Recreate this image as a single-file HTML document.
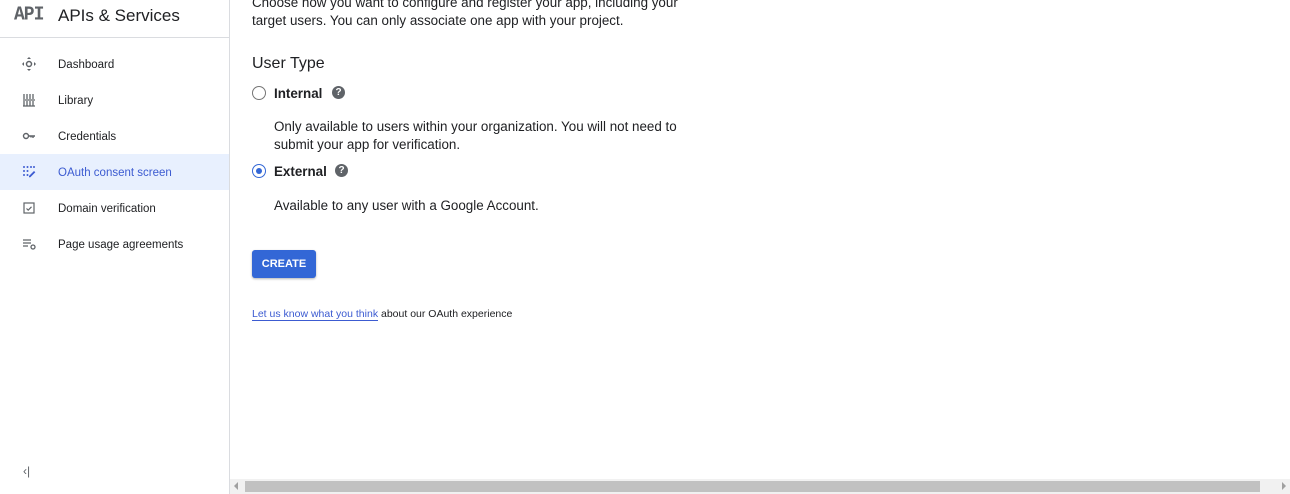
<!DOCTYPE html>
<html><head><meta charset="utf-8"><style>
*{margin:0;padding:0;box-sizing:border-box}
body{width:1290px;height:494px;overflow:hidden;background:#fff;font-family:"Liberation Sans",Arial,sans-serif;color:#202124;position:relative}
.side{position:absolute;left:0;top:0;width:230px;height:494px;border-right:1px solid #dadce0;background:#fff}
.hdr{height:38px;border-bottom:1px solid #dadce0;position:relative}
.api{position:absolute;left:14px;top:5px;font-family:"Liberation Mono",monospace;font-weight:bold;font-size:18px;color:#5f6368;letter-spacing:-1px;transform:scaleY(1.1)}
.title{position:absolute;left:58px;top:6px;font-size:17px;color:#202124}
.item{position:absolute;left:0;width:229px;height:36px;font-size:11.5px;line-height:38px}
.item span{position:absolute;left:58px}
.item svg{position:absolute;left:22px;top:11px}
.sel{background:#e8f0fe;color:#3c5bd1}
.main{position:absolute;left:252px;top:0;font-size:13.4px;line-height:18px}
.radio{position:absolute;width:14px;height:14px;border:1.5px solid #757575;border-radius:50%}
.rsel{border-color:#3367d6}
.rsel:after{content:"";position:absolute;left:2.5px;top:2.5px;width:6px;height:6px;border-radius:50%;background:#3367d6}
.q{position:absolute;width:13px;height:13px;border-radius:50%;background:#5f6368;color:#fff;font-size:10px;font-weight:bold;text-align:center;line-height:13px}
.btn{position:absolute;left:252px;top:250px;width:64px;height:28px;background:#3367d6;border-radius:3px;color:#fff;font-size:11px;font-weight:bold;text-align:center;line-height:28px;box-shadow:0 1px 2px rgba(0,0,0,.3)}
.sb{position:absolute;left:230px;top:479px;width:1060px;height:15px;background:#f1f1f1}
.th{position:absolute;left:245px;top:481px;width:1015px;height:11px;background:#c1c1c1}
</style></head><body>
<div class="side">
<div class="hdr"><div class="api">API</div><div class="title">APIs &amp; Services</div></div>
<div class="item" style="top:46px"><svg width="14" height="14" viewBox="0 0 14 14" fill="#5f6368"><path d="M7 0l2 2H5zM7 14l2-2H5zM0 7l2-2v4zM14 7l-2-2v4z"/><circle cx="7" cy="7" r="2.5" fill="none" stroke="#5f6368" stroke-width="1.5"/></svg><span>Dashboard</span></div>
<div class="item" style="top:82px"><svg width="14" height="14" viewBox="0 0 14 14" stroke="#5f6368" stroke-width="1.3"><path d="M2 1v5M5 1v5M8 1v5M11 1v5M1 7h12M2 8v5M5 8v5M8 8v5M11 8v5M1 13h12"/></svg><span>Library</span></div>
<div class="item" style="top:118px"><svg width="14" height="14" viewBox="0 0 14 14"><circle cx="4" cy="7" r="2.5" fill="none" stroke="#5f6368" stroke-width="1.4"/><path d="M6.5 7h6.5M11 7v2M9 7v1.5" stroke="#5f6368" stroke-width="1.4"/></svg><span>Credentials</span></div>
<div class="item sel" style="top:154px"><svg width="14" height="14" viewBox="0 0 14 14" fill="#3c5bd1"><circle cx="2" cy="2" r="1"/><circle cx="5.5" cy="2" r="1"/><circle cx="9" cy="2" r="1"/><circle cx="12" cy="2" r="1"/><circle cx="2" cy="6" r="1"/><circle cx="5.5" cy="6" r="1"/><circle cx="2" cy="10" r="1"/><circle cx="5.5" cy="10" r="1"/><path d="M7 11l5-5 1.3 1.3-5 5H7z"/></svg><span>OAuth consent screen</span></div>
<div class="item" style="top:190px"><svg width="14" height="14" viewBox="0 0 14 14" fill="none" stroke="#5f6368" stroke-width="1.2"><rect x="2" y="2" width="10" height="10"/><path d="M4.5 7.5l1.7 1.7 3.3-3.4"/></svg><span>Domain verification</span></div>
<div class="item" style="top:226px"><svg width="14" height="14" viewBox="0 0 14 14" stroke="#5f6368" stroke-width="1.3" fill="none"><path d="M1 3h8M1 6h8M1 9h5"/><circle cx="11" cy="10" r="2"/></svg><span>Page usage agreements</span></div>
<div style="position:absolute;left:23px;top:464px;font-size:12px;color:#5f6368">&lsaquo;|</div>
</div>
<div class="main">
<div style="position:absolute;top:-6px;left:0;width:436px">Choose how you want to configure and register your app, including your target users. You can only associate one app with your project.</div>
<div style="position:absolute;top:55px;left:0;font-size:16px;white-space:nowrap">User Type</div>
<div class="radio" style="top:86px;left:0"></div>
<div style="position:absolute;top:85px;left:22px;font-weight:bold;white-space:nowrap">Internal</div>
<div class="q" style="top:86px;left:80px">?</div>
<div style="position:absolute;top:118px;left:22px;width:414px">Only available to users within your organization. You will not need to submit your app for verification.</div>
<div class="radio rsel" style="top:164px;left:0"></div>
<div style="position:absolute;top:163px;left:22px;font-weight:bold;white-space:nowrap">External</div>
<div class="q" style="top:164px;left:83px">?</div>
<div style="position:absolute;top:197px;left:22px;white-space:nowrap">Available to any user with a Google Account.</div>
<div style="position:absolute;top:305px;left:0;font-size:10.5px;white-space:nowrap"><span style="color:#3c5bd1;border-bottom:1px solid #3c5bd1">Let us know what you think</span> about our OAuth experience</div>
</div>
<div class="btn">CREATE</div>
<div class="sb"></div><div class="th"></div>
<div style="position:absolute;left:234px;top:482px;width:0;height:0;border:4px solid transparent;border-right:4px solid #a0a0a0;border-left:0"></div>
<div style="position:absolute;left:1282px;top:482px;width:0;height:0;border:4px solid transparent;border-left:4px solid #a0a0a0;border-right:0"></div>
</body></html>
